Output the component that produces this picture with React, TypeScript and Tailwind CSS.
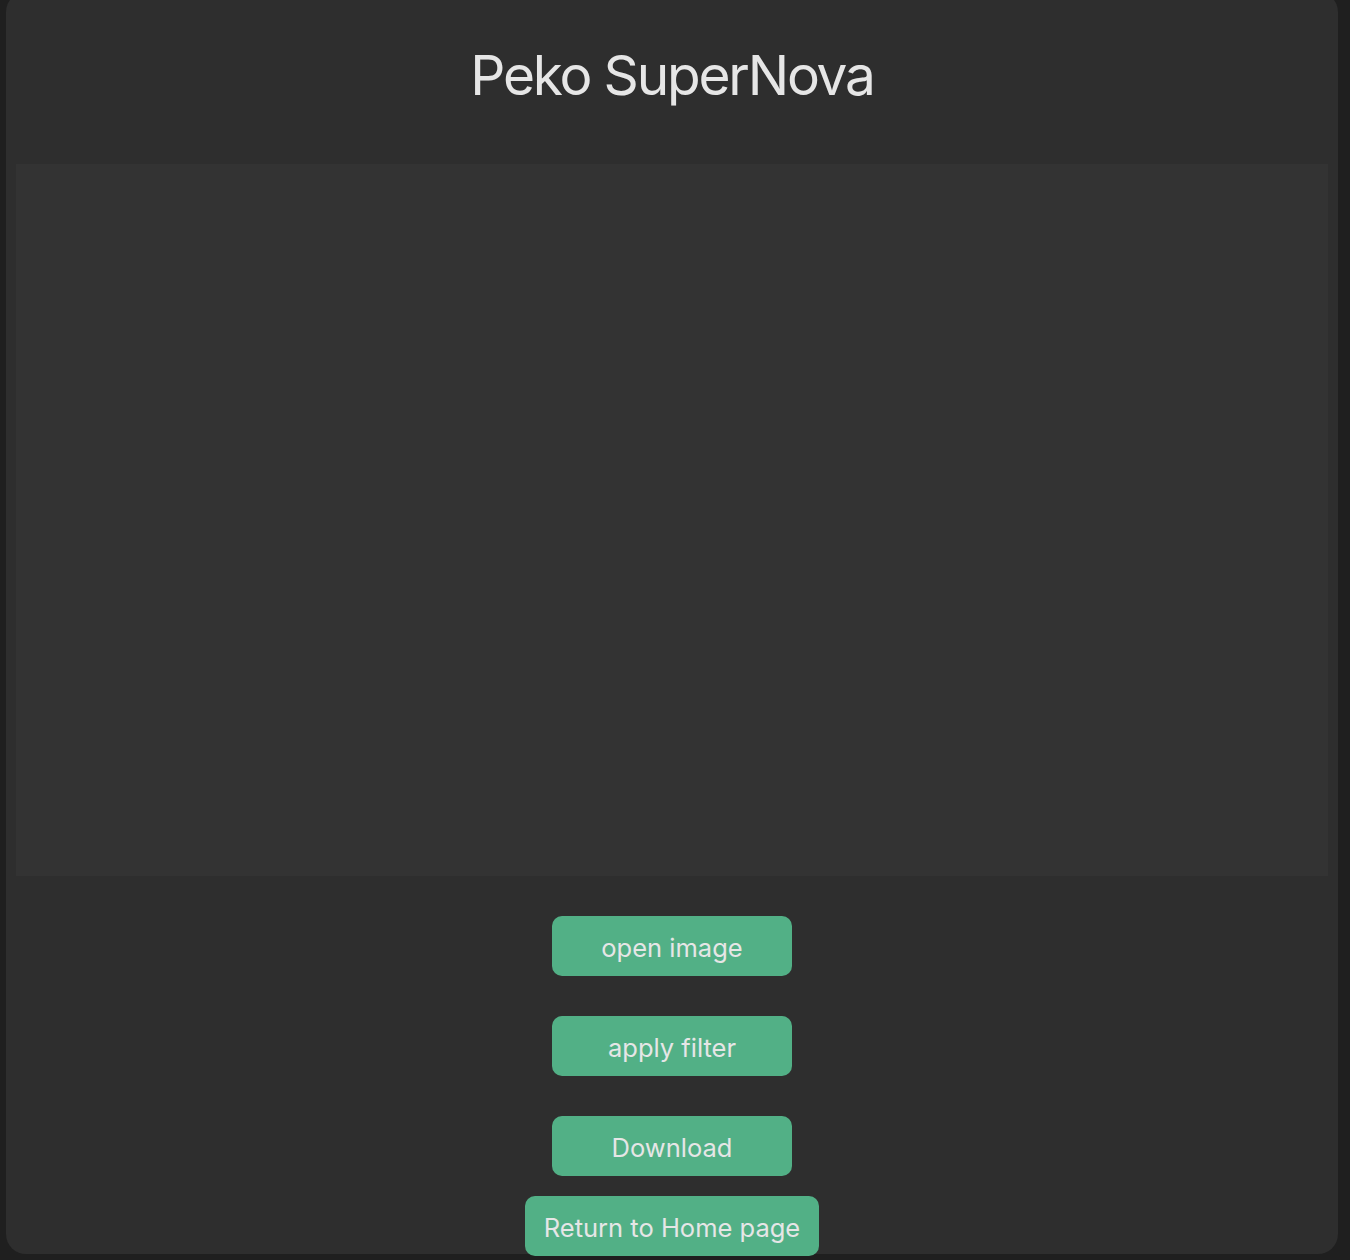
export default function App() {
  const buttons = ["open image", "apply filter", "Download"];
  return (
    <div className="min-h-[1260px] bg-[#1f1f1f] font-['Inter','Noto_Sans',sans-serif] overflow-hidden">
      <div className="ml-[6px] mt-[-8px] w-[1332px] h-[1262px] rounded-[20px] bg-[#2e2e2e] px-[10px] flex flex-col items-center">
        <h1 className="shrink-0 mt-[43px] h-[80px] leading-[80px] text-[55px] tracking-[-2.2px] text-[#e6e6e6] font-normal">
          Peko SuperNova
        </h1>
        <div className="shrink-0 mt-[49px] w-full h-[712px] bg-[#333333]" />
        <div className="shrink-0 mt-[40px] flex flex-col items-center gap-[40px]">
          {buttons.map((b) => (
            <button
              key={b}
              className="w-[240px] h-[60px] pt-[4px] rounded-[10px] bg-[#52b086] text-[25.5px] text-[#e6e6e6]"
            >
              {b}
            </button>
          ))}
        </div>
        <button className="shrink-0 mt-[20px] px-[19px] h-[60px] pt-[4px] rounded-[10px] bg-[#52b086] text-[25.5px] text-[#e6e6e6] relative z-10">
          Return to Home page
        </button>
      </div>
    </div>
  );
}
